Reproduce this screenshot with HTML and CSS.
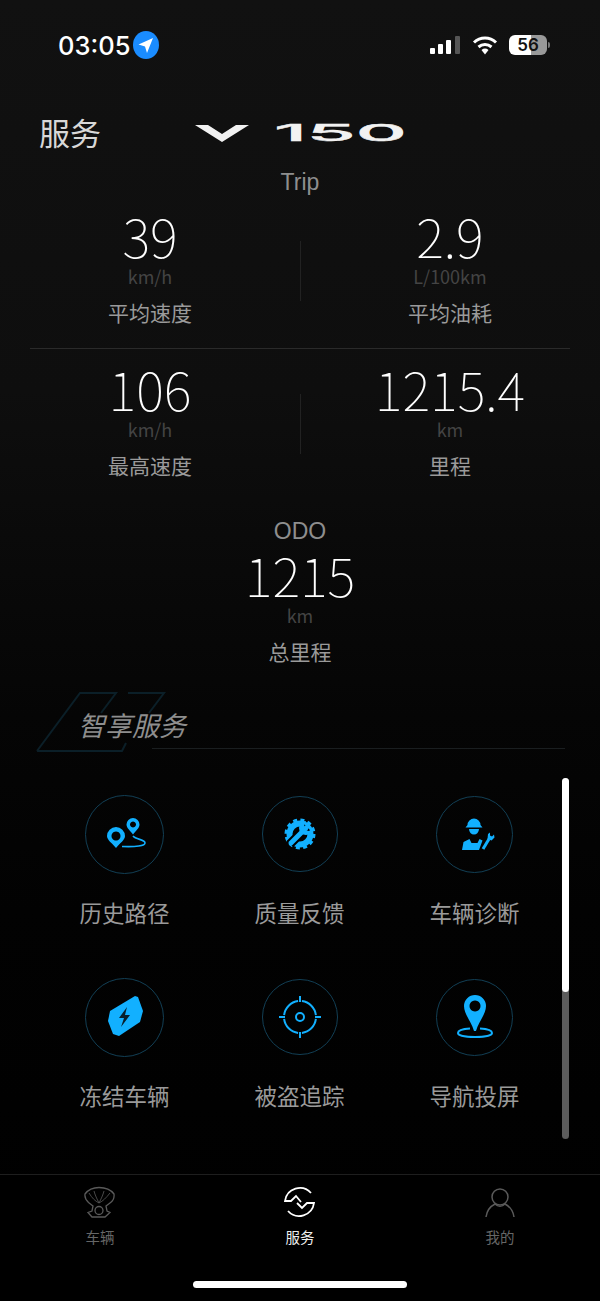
FILE: index.html
```html
<!DOCTYPE html>
<html lang="zh-CN">
<head>
    <meta charset="UTF-8">
    <meta name="viewport" content="width=device-width, initial-scale=1.0">
    <title>服务</title>
    <link rel="stylesheet" href="styles.css">
</head>
<body>
    <div class="screen">
        <div class="status-bar">
            <div class="status-left">
                <span class="clock">03:05</span>
                <svg class="loc" width="26" height="28" viewBox="0 0 26 28"><ellipse cx="13" cy="14" rx="13" ry="14" fill="#1a8cff"/><path d="M20 7 L5.500 13.500 L12 15.500 L14 22 Z" fill="#fff"/></svg>
            </div>
            <div class="status-right">
                <svg width="31" height="20" viewBox="0 0 31 20"><rect x="0" y="13" width="5" height="6" rx="1" fill="#fff"/><rect x="8" y="9" width="5" height="10" rx="1" fill="#fff"/><rect x="16" y="5" width="5" height="14" rx="1" fill="#fff"/><rect x="25" y="1" width="5" height="18" rx="1" fill="#555"/></svg>
                <svg width="26" height="20" viewBox="0 0 26 20"><path d="M2 7.500 A16 16 0 0 1 24 7.500" fill="none" stroke="#fff" stroke-width="3"/><path d="M6.500 12 A10 10 0 0 1 19.500 12" fill="none" stroke="#fff" stroke-width="3"/><path d="M9.500 15 A5.500 5.500 0 0 1 16.500 15 L13 19.500 Z" fill="#fff"/></svg>
                <div class="battery"><span class="battery-num">56</span></div>
            </div>
        </div>

        <div class="top-bar">
            <h1 class="page-title">服务</h1>
            <div class="model">
                <svg width="54" height="17" viewBox="0 0 54 17"><polygon points="0,0 13,0 27,9 41,0 54,0 27,17" fill="#f2f2f2"/></svg>
                <div class="model-num"><span>150</span></div>
            </div>
        </div>

        <div class="data-title trip-title">Trip</div>

        <div class="stat-row with-line">
            <div class="stat">
                <div class="stat-value">39</div>
                <div class="stat-unit">km/h</div>
                <div class="stat-label">平均速度</div>
            </div>
            <div class="stat">
                <div class="stat-value">2.9</div>
                <div class="stat-unit">L/100km</div>
                <div class="stat-label">平均油耗</div>
            </div>
        </div>
        <div class="stat-row">
            <div class="stat">
                <div class="stat-value">106</div>
                <div class="stat-unit">km/h</div>
                <div class="stat-label">最高速度</div>
            </div>
            <div class="stat">
                <div class="stat-value">1215.4</div>
                <div class="stat-unit">km</div>
                <div class="stat-label">里程</div>
            </div>
        </div>

        <div class="odo">
            <div class="data-title odo-title">ODO</div>
            <div class="stat-value">1215</div>
            <div class="stat-unit">km</div>
            <div class="stat-label">总里程</div>
        </div>

        <div class="section-head">
            <svg class="section-mark" width="130" height="62" viewBox="0 0 130 62"><path d="M1 60 L44 2 L80 2 L65 22 M92 2 L128 2 L113 22 M1 60 L86 60 L90 52" fill="none" stroke="#0b1f28" stroke-width="2"/></svg>
            <h2 class="section-title">智享服务</h2>
        </div>

        <div class="service-grid">
            <div class="service">
                <div class="ring ring-lg">
                    <svg width="60" height="60" viewBox="0 0 60 60">
                        <path fill-rule="evenodd" d="M21 23 a9 9 0 0 1 9 9 c0 4 -5 7 -9 12 c-4 -5 -9 -8 -9 -12 a9 9 0 0 1 9 -9 Z M21 27.500 a4.500 4.500 0 1 0 0.010 0 Z" fill="#12b0ff"/>
                        <path fill-rule="evenodd" d="M38 14 a6.500 6.500 0 0 1 6.500 6.500 c0 3.500 -3.500 6 -6.500 10 c-3 -4 -6.500 -6.500 -6.500 -10 a6.500 6.500 0 0 1 6.500 -6.500 Z M38 17.500 a3 3 0 1 0 0.010 0 Z" fill="#12b0ff"/>
                        <path d="M38 32 c3 4 12 3 12 7 c0 3 -9 4 -23 3.500" fill="none" stroke="#12b0ff" stroke-width="1.600"/>
                    </svg>
                </div>
                <div class="service-name">历史路径</div>
            </div>
            <div class="service">
                <div class="ring ring-md">
                    <svg width="60" height="60" viewBox="0 0 60 60">
                        <circle cx="30" cy="30" r="10.500" fill="none" stroke="#12b0ff" stroke-width="6"/>
                        <circle cx="30" cy="30" r="14" fill="none" stroke="#12b0ff" stroke-width="3" stroke-dasharray="4 3.330"/>
                        <path d="M20 40 L37 23" stroke="#000" stroke-width="9"/>
                        <path d="M21 39 L36 24" stroke="#12b0ff" stroke-width="5" stroke-linecap="round"/>
                        <path d="M36 17 a7 7 0 1 0 7 7 l-4 3 l-4 -1 l-1 -4 Z" fill="#12b0ff"/>
                    </svg>
                </div>
                <div class="service-name">质量反馈</div>
            </div>
            <div class="service">
                <div class="ring ring-mdl">
                    <svg width="60" height="60" viewBox="0 0 60 60">
                        <path d="M22.500 21 a6.500 6.500 0 0 1 13 0 l2 2.500 h-17 Z" fill="#12b0ff"/>
                        <path d="M24 25 h10 a5 5.500 0 0 1 -10 0 Z" fill="#12b0ff"/>
                        <path d="M17 46 l1.500 -8 l6 -3 l2 4 h6 l2 -4 l3 1.500 l-3.500 9.500 Z" fill="#12b0ff"/>
                        <path d="M38 45 l6 -10" stroke="#12b0ff" stroke-width="3"/>
                        <path d="M42.500 35 l0.500 -5 l2 -1.500 v3 l2 1 l2 -2 l0.500 3 l-3 3 Z" fill="#12b0ff"/>
                    </svg>
                </div>
                <div class="service-name">车辆诊断</div>
            </div>
            <div class="service">
                <div class="ring ring-lg">
                    <svg width="60" height="60" viewBox="0 0 60 60">
                        <polygon points="40,9 43,10 48,24 45,35 24,49 18,47 13,34 15,24" fill="#12b0ff"/>
                        <path d="M32 20 L24 31 L29 31 L26 40 L35 28 L30 28 Z" fill="#08202c"/>
                    </svg>
                </div>
                <div class="service-name">冻结车辆</div>
            </div>
            <div class="service">
                <div class="ring ring-md">
                    <svg width="60" height="60" viewBox="0 0 60 60">
                        <circle cx="30" cy="30" r="4" fill="none" stroke="#12b0ff" stroke-width="2"/>
                        <path d="M30 14 A16 16 0 0 1 46 30 M46 30 A16 16 0 0 1 30 46 M30 46 A16 16 0 0 1 14 30 M14 30 A16 16 0 0 1 30 14" fill="none" stroke="#12b0ff" stroke-width="2" stroke-dasharray="21 4.100" stroke-dashoffset="-2"/>
                        <path d="M30 9 V15 M30 45 V51 M9 30 H15 M45 30 H51" stroke="#12b0ff" stroke-width="2"/>
                    </svg>
                </div>
                <div class="service-name">被盗追踪</div>
            </div>
            <div class="service">
                <div class="ring ring-mdl">
                    <svg width="60" height="60" viewBox="0 0 60 60">
                        <path fill-rule="evenodd" d="M30 8 a11 11 0 0 1 11 11 c0 8 -7 15 -10 25 h-2 c-3 -10 -10 -17 -10 -25 a11 11 0 0 1 11 -11 Z M30 13.500 a5.500 5.500 0 1 0 0.010 0 Z" fill="#12b0ff"/>
                        <path d="M25 41.500 C16 42 13 44 13 46 C13 48.500 20 50 30 50 C40 50 47 48.500 47 46 C47 44 44 42 35 41.500" fill="none" stroke="#12b0ff" stroke-width="2"/>
                    </svg>
                </div>
                <div class="service-name">导航投屏</div>
            </div>
        </div>

        <div class="scroll-track"><div class="scroll-thumb"></div></div>

        <div class="tab-bar">
            <div class="tabs">
                <div class="tab">
                    <svg width="32" height="34" viewBox="0 0 32 34" fill="none" stroke="#5a5a5a" stroke-width="1.300">
                        <path d="M15 1.500 C21 1.500 27 4 30 8 C30.500 12 29 15 26 17 L22 20 L23 25 L26 26.500 L21 31 H8 L4 26.500 L8 25 L9 20 L4.500 16.500 C2 14 0.500 11 1 8 C4 4 9 1.500 15 1.500 Z"/>
                        <path d="M5 7 C8 12 11 15 15 17 C19 15 22 12 26 7 M10 5 C11 9 13 13 15 17 C17 13 19 9 20 5" stroke-width="0.800"/>
                        <circle cx="15" cy="24.500" r="4"/>
                    </svg>
                    <span class="tab-name">车辆</span>
                </div>
                <div class="tab active">
                    <svg width="32" height="32" viewBox="0 0 32 32" fill="none" stroke="#fff" stroke-width="1.800">
                        <path d="M27 6 A15 15 0 0 0 1 14 H7 L12 9 L17 15"/>
                        <path d="M4 24 A15 15 0 0 0 30 16 H23 L18 21 L13 16"/>
                    </svg>
                    <span class="tab-name">服务</span>
                </div>
                <div class="tab">
                    <svg width="30" height="32" viewBox="0 0 30 32" fill="none" stroke="#5a5a5a" stroke-width="1.500">
                        <circle cx="15" cy="10" r="8"/>
                        <path d="M1 30 C2 23 6 19 10 17 C13 20 17 20 20 17 C24 19 28 23 29 30"/>
                    </svg>
                    <span class="tab-name">我的</span>
                </div>
            </div>
            <div class="home-bar"></div>
        </div>
    </div>
</body>
</html>
```

FILE: styles.css
```css
html, body {
    margin: 0;
    padding: 0;
}

body {
    font-family: "Noto Sans CJK SC", "Liberation Sans", sans-serif;
    background: #000;
    color: #999;
}

.screen {
    position: relative;
    width: 600px;
    height: 1301px;
    overflow: hidden;
    display: flex;
    flex-direction: column;
    background: linear-gradient(180deg, #111 0%, #0e0e0e 30%, #050505 55%, #020202 70%, #000 100%);
}

/* status bar */
.status-bar {
    height: 90px;
    display: flex;
    justify-content: space-between;
    align-items: center;
    padding: 0 53px 0 58px;
}

.status-left {
    display: flex;
    align-items: center;
    gap: 3px;
}

.clock {
    font-family: Inter, "Liberation Sans", sans-serif;
    font-size: 25.500px;
    font-weight: 500;
    color: #fff;
}

.status-right {
    display: flex;
    align-items: center;
    gap: 11px;
}

.battery {
    position: relative;
    width: 38px;
    height: 20px;
    border-radius: 6px;
    background: linear-gradient(90deg, #fff 58%, #999 58%);
    display: flex;
    align-items: center;
    justify-content: center;
}

.battery::after {
    content: "";
    position: absolute;
    right: -3px;
    top: 7px;
    width: 2px;
    height: 6px;
    border-radius: 0 2px 2px 0;
    background: #777;
}

.battery-num {
    font-family: Inter, "Liberation Sans", sans-serif;
    font-size: 17px;
    font-weight: 600;
    line-height: 20px;
    color: #111;
}

/* title + model */
.top-bar {
    height: 86px;
    display: flex;
    align-items: center;
    padding-left: 39px;
}

.page-title {
    margin: -4px 0 0;
    width: 156px;
    font-size: 31px;
    font-weight: 400;
    color: #d8d8d8;
}

.model {
    display: flex;
    align-items: center;
    gap: 25px;
}

.model-num {
    width: 131px;
    height: 17px;
    font-family: Inter, "Liberation Sans", sans-serif;
    font-size: 23px;
    font-weight: 500;
    line-height: 17px;
    color: #f2f2f2;
}

.model-num span {
    display: inline-block;
    transform-origin: left center;
    transform: scaleX(3.440);
    -webkit-text-stroke: 0.4px #f2f2f2;
}

.data-title {
    height: 20px;
    line-height: 20px;
    text-align: center;
    font-family: "Liberation Sans", sans-serif;
    font-size: 23px;
    color: #8e8e8e;
}

.trip-title {
    margin-top: -4px;
    height: 24px;
}

/* trip numbers */
.stat-row {
    position: relative;
    display: grid;
    grid-template-columns: 1fr 1fr;
    height: 143px;
    padding-top: 10px;
}

.stat-row::before {
    content: "";
    position: absolute;
    left: 300px;
    top: 45px;
    width: 1px;
    height: 60px;
    background: #222;
}

.with-line::after {
    content: "";
    position: absolute;
    left: 30px;
    right: 30px;
    bottom: 0;
    height: 1px;
    background: #2a2a2a;
}

.stat {
    text-align: center;
}

.stat-value {
    height: 58px;
    line-height: 58px;
    font-family: "Noto Sans CJK SC", Roboto, sans-serif;
    font-size: 53px;
    font-weight: 100;
    color: #fff;
}

.stat-unit {
    margin-top: 2px;
    height: 20px;
    line-height: 20px;
    font-size: 18px;
    color: #444;
}

.stat-label {
    margin-top: 12px;
    height: 28px;
    line-height: 28px;
    font-size: 21px;
    color: #9a9a9a;
}

.odo {
    text-align: center;
    margin-top: 15px;
}

.odo-title {
    height: 28px;
    line-height: 28px;
}

/* services */
.section-head {
    position: relative;
    margin: 26px 35px 0 38px;
    height: 58px;
}

.section-head::after {
    content: "";
    position: absolute;
    left: 114px;
    right: 0;
    bottom: 0;
    height: 1px;
    background: #1a1e20;
}

.section-mark {
    position: absolute;
    left: -2px;
    top: 0;
}

.section-title {
    position: absolute;
    left: 40px;
    top: 16px;
    margin: 0;
    font-size: 27px;
    font-weight: 400;
    font-style: italic;
    line-height: 36px;
    color: #8e8e8e;
}

.service-grid {
    display: grid;
    grid-template-columns: repeat(3, 175px);
    grid-auto-rows: 183px;
    padding: 45px 0 0 37px;
}

.service {
    display: flex;
    flex-direction: column;
    align-items: center;
}

.ring {
    height: 80px;
    display: flex;
    align-items: center;
    justify-content: center;
    position: relative;
}

.ring::before {
    content: "";
    position: absolute;
    border: 1px solid #123f55;
    border-radius: 50%;
    box-sizing: border-box;
}

.ring-lg::before {
    width: 79px;
    height: 79px;
}

.ring-md::before {
    width: 76px;
    height: 76px;
}

.ring-mdl::before {
    width: 77px;
    height: 77px;
}

.ring svg {
    position: relative;
}

.service-name {
    margin-top: 22px;
    line-height: 32px;
    font-size: 22.500px;
    color: #9a9a9a;
}

.scroll-track {
    position: absolute;
    left: 562px;
    top: 778px;
    width: 7px;
    height: 361px;
    border-radius: 4px;
    background: #5c5c5c;
}

.scroll-thumb {
    height: 214px;
    border-radius: 4px;
    background: #fff;
}

/* bottom tabs */
.tab-bar {
    margin-top: auto;
    height: 127px;
    box-sizing: border-box;
    border-top: 1px solid #1e1e1e;
    background: #000;
    display: flex;
    flex-direction: column;
}

.tabs {
    display: grid;
    grid-template-columns: repeat(3, 1fr);
    padding-top: 11px;
}

.tab {
    display: flex;
    flex-direction: column;
    align-items: center;
    height: 62px;
}

.tab svg {
    height: 34px;
}

.tab-name {
    margin-top: 6px;
    line-height: 22px;
    font-size: 14.500px;
    color: #666;
}

.active .tab-name {
    color: #eee;
}

.home-bar {
    width: 214px;
    height: 7px;
    margin: 33px auto 0;
    border-radius: 4px;
    background: #fff;
}
```
